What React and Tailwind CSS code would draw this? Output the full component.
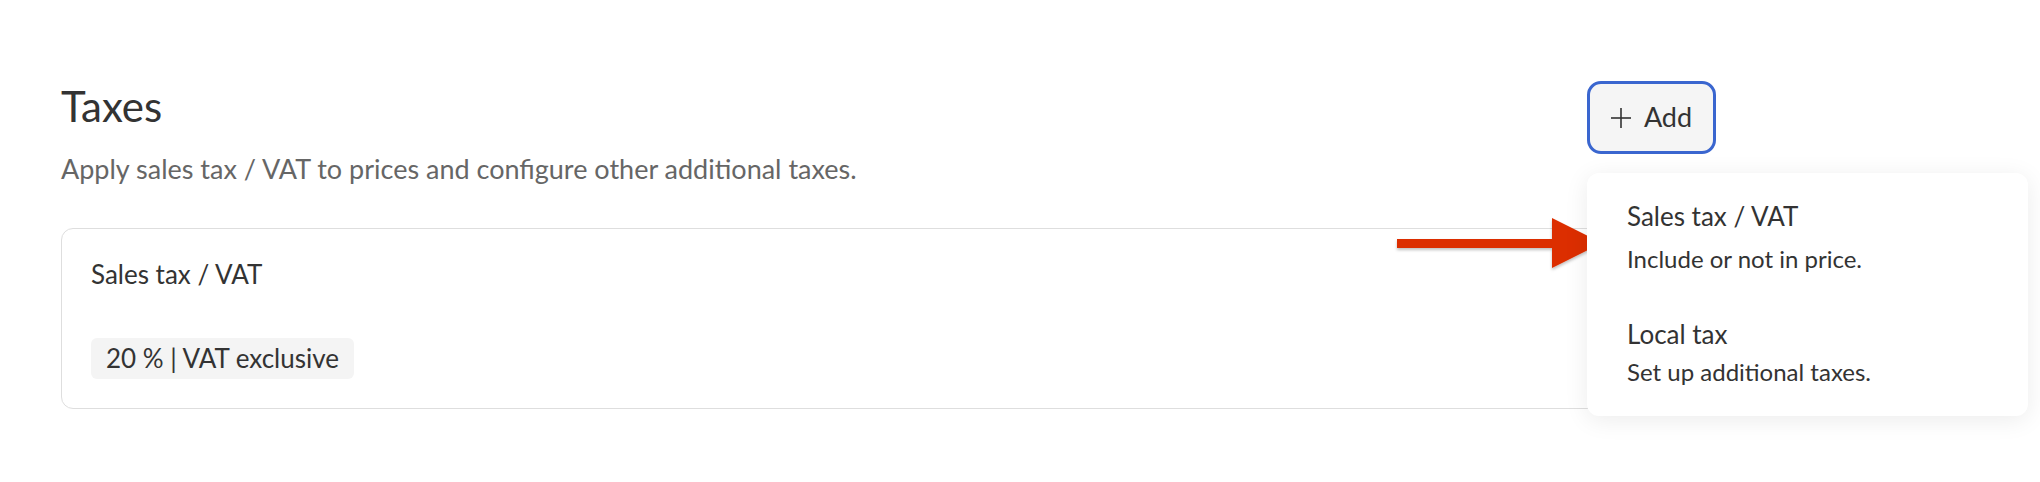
import React from "react";

const font = { fontFamily: "Lato, 'Noto Sans', sans-serif" };

const PlusIcon = () => (
  <svg width="20" height="20" viewBox="0 0 20 20" className="shrink-0">
    <line x1="10" y1="0" x2="10" y2="20" stroke="#333" strokeWidth="1.6" />
    <line x1="0" y1="10" x2="20" y2="10" stroke="#333" strokeWidth="1.6" />
  </svg>
);

const RedArrow = () => (
  <svg
    width="216"
    height="62"
    viewBox="0 0 216 62"
    className="absolute left-[1393px] top-[212px] pointer-events-none"
  >
    <defs>
      <filter id="arrowShadow" x="-10%" y="-20%" width="120%" height="160%">
        <feDropShadow dx="0" dy="2" stdDeviation="1.5" floodColor="#000" floodOpacity="0.25" />
      </filter>
    </defs>
    <polygon
      points="4,27 159,27 159,6 209,31 159,56 159,36 4,36"
      fill="#dc2e06"
      filter="url(#arrowShadow)"
    />
  </svg>
);

const menuItems = [
  { title: "Sales tax / VAT", desc: "Include or not in price.", gap: "gap-[13px]" },
  { title: "Local tax", desc: "Set up additional taxes.", gap: "gap-[8px]" },
];

export default function App() {
  return (
    <div className="relative min-h-[482px] bg-white pl-[61px] pt-[81px] text-[#333]" style={font}>
      <div className="w-[1655px]">
        {/* Header */}
        <div className="flex items-start justify-between">
          <div>
            <h2 className="text-[42px] leading-[1.2] font-normal text-[#333]">Taxes</h2>
            <p className="mt-[22px] text-[27px] leading-[1.2] text-[#666]">
              Apply sales tax / VAT to prices and configure other additional taxes.
            </p>
          </div>

          <div className="relative">
            <button className="flex h-[73px] w-[129px] items-center justify-center gap-[13px] rounded-[14px] border-[3px] border-[#3a66cf] bg-[#f5f5f5] text-[27px] text-[#333]">
              <PlusIcon />
              <span>Add</span>
            </button>

            {/* Dropdown */}
            <div className="absolute left-0 top-[92px] z-10 flex w-[441px] flex-col gap-[45px] rounded-[12px] bg-white pb-[29px] pl-[40px] pt-[28px] shadow-[0_4px_24px_rgba(0,0,0,0.08)]">
              {menuItems.map((item) => (
                <div key={item.title} className={`flex flex-col ${item.gap}`}>
                  <p className="text-[26px] leading-[1.2] text-[#333]">{item.title}</p>
                  <p className="text-[24px] leading-[1.2] text-[#333]">{item.desc}</p>
                </div>
              ))}
            </div>
          </div>
        </div>

        {/* Existing tax card */}
        <div className="mt-[42px] rounded-[12px] border border-[#dedede] px-[29px] pb-[29px] pt-[30px]">
          <p className="text-[26px] leading-[1.2] text-[#333]">Sales tax / VAT</p>
          <span className="mt-[48px] inline-block rounded-[6px] bg-[#f4f4f4] px-[15px] py-[5px] text-[26px] leading-[1.2] text-[#333]">
            20 % | VAT exclusive
          </span>
        </div>
      </div>

      <RedArrow />
    </div>
  );
}
